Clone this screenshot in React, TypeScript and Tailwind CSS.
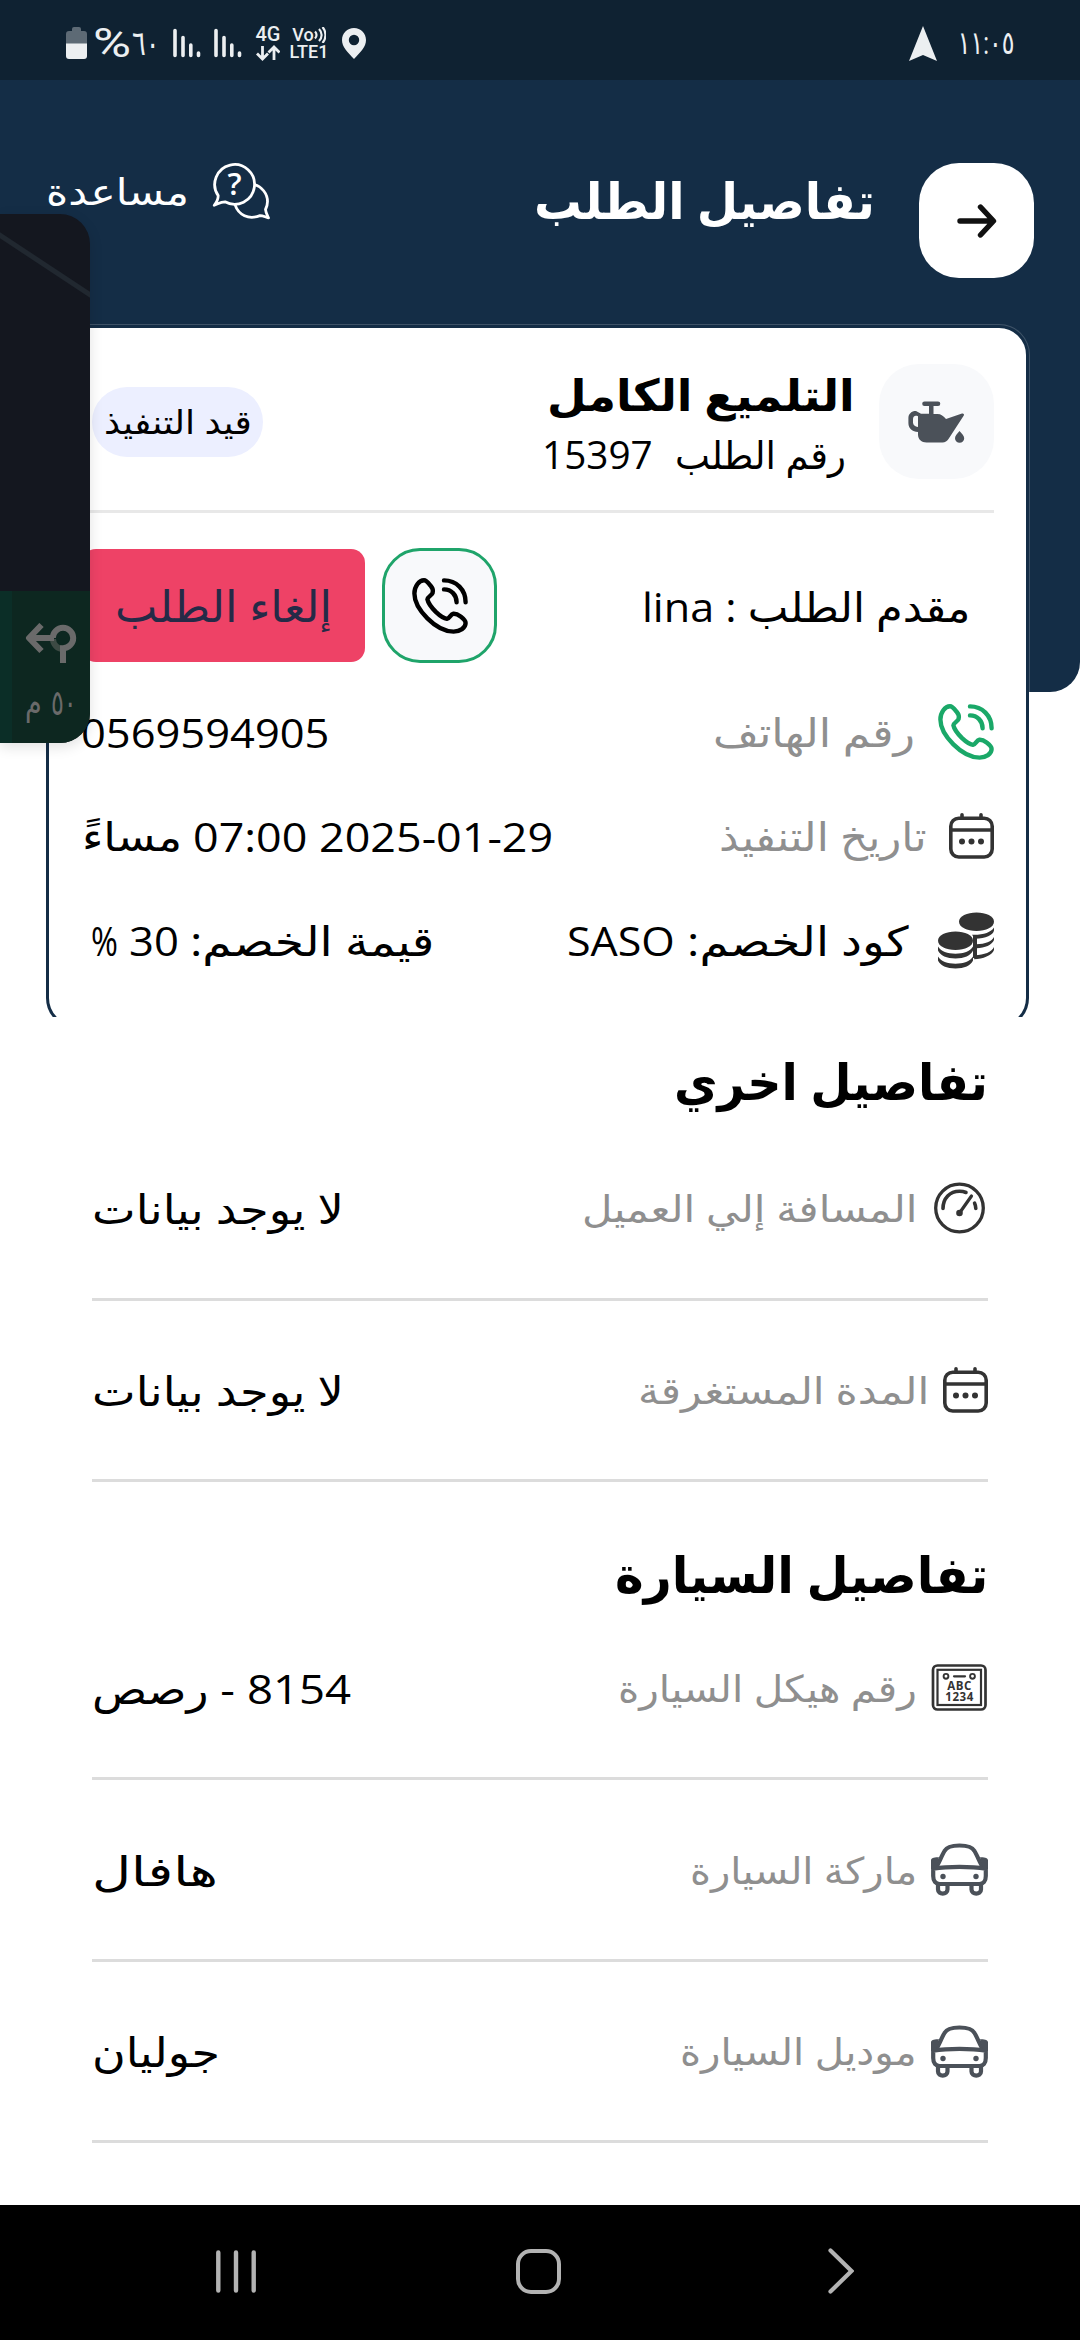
import { useLayoutEffect, useRef, useState, type ReactNode } from 'react'

// Stretches or squeezes a single line so that it fills the width given by its classes
function FitText({ className, children }: { className: string; children: ReactNode }) {
  const box = useRef<HTMLSpanElement>(null)
  const line = useRef<HTMLSpanElement>(null)
  const [scale, setScale] = useState(1)

  useLayoutEffect(() => {
    if (!box.current || !line.current) return
    setScale(box.current.offsetWidth / line.current.offsetWidth)
  }, [children])

  return (
    <span ref={box} className={`flex shrink-0 justify-start ${className}`}>
      <span
        ref={line}
        className="block shrink-0 whitespace-pre origin-right"
        style={{ transform: `scaleX(${scale})` }}
      >
        {children}
      </span>
    </span>
  )
}

function PhoneIcon({ className }: { className: string }) {
  return (
    <svg viewBox="0 0 56 56" className={className} fill="none" stroke="currentColor" strokeWidth="4.4" strokeLinecap="round" strokeLinejoin="round">
      <path d="M2.4 15.5C2.4 8.5 7 2.3 12 2.3c2.6 0 4.4 2.6 6.6 5.4 2.2 2.7 3 4.6 2 7.4-.9 2.4-5 3.6-5.2 6.2.6 3 4.4 8.6 8.4 12.6 4 3.8 8.6 6.6 11.2 7 2.6-.4 3.6-4.8 6.4-5.2 2.6-.2 4.6.8 7.2 2.8 2.8 2.2 5 3.8 5 6.5 0 5-5.6 8.6-12 8.600C24 53.600 2.400 31 2.400 15.500z" />
      <path d="M32 2.400c12.400 0 21.600 9.200 21.600 21.800" />
      <path d="M32 11.400c7.400 0 12.600 5.600 12.600 12.800" />
    </svg>
  )
}

function HelpIcon() {
  return (
    <svg viewBox="0 0 56 56" className="size-14 overflow-visible" fill="none" stroke="currentColor" strokeWidth="2.8" strokeLinejoin="round">
      <path d="M5.2 32.600A19.900 19.900 0 1 1 12 38.800C8 38.800 5 40.800 1.200 42.300c2.600-3 4-6 4-9.700z" />
      <path d="M41.500 21.500c7 2 13 9 13 17 0 3-.8 5.600-2 8 .2 3 1.600 5.500 3 8.300-3-.6-5.500-2.300-8.500-2.200-11.500 4.500-21.500-.6-25-11" />
      <text x="21.5" y="32" textAnchor="middle" fontSize="31" fontFamily="Open Sans" fontWeight="600" fill="currentColor" stroke="none">?</text>
    </svg>
  )
}

function OilCanIcon() {
  return (
    <svg viewBox="0 0 57 42" className="w-[57px] h-[42px]" fill="#4b5159">
      <path d="M16.500.500h13.500a2.200 2.200 0 0 1 0 4.600h-4.500V13h4c3.500 0 6 2 8.500 5l16-5.400c1.500-.4 2.500.8 1.800 2L40.500 38c-1.600 2.300-3.200 3.400-6 3.400H18.500c-5 0-8.500-3.200-8.500-8V31C4.500 30.500.400 27.500.400 22v-5C.400 12.500 4 9.800 8 10l5 2.800h8V5.100h-4.500a2.200 2.200 0 0 1 0-4.600zM10 15.200c-3-1.200-5 0-5 3v3.300c0 2.500 2 4.200 5 4.500z" />
      <path d="M51.500 30c2.500 3 4.700 4.800 4.700 7.200a4.600 4.600 0 0 1-9.200 0c0-2.400 2.200-4.200 4.500-7.200z" />
    </svg>
  )
}

function CalendarIcon() {
  return (
    <svg viewBox="0 0 45 46" className="w-[45px] h-[46px] shrink-0" fill="none" stroke="#333" strokeWidth="3.6">
      <rect x="1.8" y="5.2" width="41.4" height="38.8" rx="8" />
      <path d="M2 17h41" />
      <path d="M13 5V1.800M32 5V1.800" strokeLinecap="round" />
      <g fill="#333" stroke="none">
        <circle cx="13" cy="28.5" r="3" />
        <circle cx="22.5" cy="28.5" r="3" />
        <circle cx="32" cy="28.5" r="3" />
      </g>
    </svg>
  )
}

function CoinsIcon() {
  return (
    <svg viewBox="0 0 56 57" className="w-14 h-[57px] shrink-0" fill="#333">
      <ellipse cx="38.5" cy="9.7" rx="17.5" ry="9.3" />
      <path d="M56 15.500v3c-1 4.500-8 8-19 8.300l-3-4c11 .4 19-2.300 22-7.300z" />
      <path d="M56 25v3c-2 5-9 8-17.500 8.300v-4C47 32 54 29.500 56 25zM56 35v3c-2 5.500-11 9-20 9.300l1-4C46 43 54 40 56 35z" />
      <path d="M35 24h4v22h-4z" />
      <ellipse cx="17.5" cy="28.7" rx="17.5" ry="9.3" />
      <path d="M0 34.500c3 5 9.500 7.200 17.500 7.200S32 39.500 35 34.500v4c-2 5-9 8-17.500 8S2 43.500 0 38.500zM0 44.500c3 5 9.500 7.200 17.500 7.200S32 49.500 35 44.500v4c-2 5-9 8-17.500 8S2 53.500 0 48.500z" />
    </svg>
  )
}

function GaugeIcon() {
  return (
    <svg viewBox="0 0 57 52" className="w-[57px] h-[52px] shrink-0" fill="none" stroke="#333" strokeLinecap="round">
      <circle cx="28.5" cy="26" r="23.8" strokeWidth="3.3" />
      <path d="M12 26.500C12 16 19 9.200 28.500 9.200c2.500 0 4.500.4 6.500 1.300M43.600 21.200c.8 1.700 1.200 3.300 1.200 5.200" strokeWidth="3.6" />
      <path d="M28.500 31l12-17" strokeWidth="3.2" />
      <circle cx="28.5" cy="31" r="3.300" fill="#333" stroke="none" />
    </svg>
  )
}

function PlateIcon() {
  return (
    <svg viewBox="0 0 57 47" className="w-[57px] h-[47px] shrink-0" fill="none" stroke="#333">
      <rect x="2" y="1.5" width="52.5" height="44" rx="4.5" strokeWidth="2.7" />
      <rect x="6.5" y="5.8" width="43.5" height="35.2" strokeWidth="2.2" />
      <circle cx="15" cy="12.3" r="2.4" strokeWidth="1.9" />
      <circle cx="41.5" cy="12.3" r="2.4" strokeWidth="1.9" />
      <path d="M23 12.300h11" strokeWidth="2.2" strokeLinecap="round" />
      <g fill="#333" stroke="none" fontFamily="Open Sans" fontWeight="700" textAnchor="middle">
        <text x="28.3" y="25.5" fontSize="11.5" textLength="24" direction="ltr">ABC</text>
        <text x="28.3" y="37" fontSize="11.5" textLength="28" direction="ltr">1234</text>
      </g>
    </svg>
  )
}

function CarIcon() {
  return (
    <svg viewBox="0 0 57 53" className="w-[57px] h-[53px] shrink-0" fill="none" stroke="#4b5159" strokeWidth="4.2" strokeLinejoin="round">
      <path d="M4.500 25.500C8 20 10.500 13 13.500 8 15.500 4 20 2.500 28.500 2.500s13 1.500 15 5.500c3 5 5.500 12 9 17.500" />
      <path d="M2.200 25.800C17 23.200 40 23.200 54.800 25.800V33c0 5-2.500 8-6.500 8H8.700c-4 0-6.500-3-6.500-8z" />
      <path d="M7 41v5.500c0 5.500 9.500 5.500 9.500 0V41M40.500 41v5.500c0 5.500 9.500 5.500 9.500 0V41" />
      <path d="M0 17.500c0-2.500 3-3.500 8-3.300L4.500 26H0zM57 17.500c0-2.500-3-3.500-8-3.300L52.500 26H57z" fill="#4b5159" stroke="none" />
      <circle cx="12" cy="33.500" r="2.700" fill="#4b5159" stroke="none" />
      <circle cx="45" cy="33.500" r="2.700" fill="#4b5159" stroke="none" />
    </svg>
  )
}

function SignalBars() {
  return (
    <svg viewBox="0 0 28 30" className="w-7 h-[30px]" stroke="#eceff1" strokeWidth="3.6" strokeLinecap="round">
      <path d="M2 2.500v25M10 9.500v18M17.800 17v10.500M25.500 25v2.500" />
    </svg>
  )
}

function StatusBar() {
  return (
    <div dir="ltr" className="h-20 shrink-0 bg-[#0f2232] text-[#eceff1] flex items-center justify-between px-[66px] pb-[20px] pt-[26px] font-['Roboto','DejaVu_Sans',sans-serif]">
      <div className="flex items-center h-[34px]">
        <svg viewBox="0 0 21 32" className="w-[21px] h-8">
          <path d="M6 4V2a2 2 0 0 1 2-2h5a2 2 0 0 1 2 2v2h3a3 3 0 0 1 3 3v10H0V7a3 3 0 0 1 3-3z" fill="#5d6a75" />
          <path d="M0 16.500h21V29a3 3 0 0 1-3 3H3a3 3 0 0 1-3-3z" fill="#eceff1" />
        </svg>
        <FitText className="w-[38px] ml-[6px] text-[41px] leading-[36px] flex-row-reverse">%</FitText>
        <FitText className="w-[28px] ml-[1px] text-[34px] leading-[34px] flex-row-reverse">٦٠</FitText>
        <div className="flex gap-[13px] ml-[13px]">
          <SignalBars />
          <SignalBars />
        </div>
        <div className="ml-[13px] flex flex-col items-center w-[26px]">
          <span className="text-[20px] leading-[17px] font-medium">4G</span>
          <svg viewBox="0 0 24 16" className="w-6 h-4 mt-[2px]" fill="none" stroke="#eceff1" strokeWidth="2.8">
            <path d="M6.500 1v12.500M1 8.500l5.500 5.500L12 8.500M18 15V2.500M12.500 7.500L18 2l5.500 5.500" />
          </svg>
        </div>
        <div className="ml-[9px] flex flex-col items-center w-[38px] font-medium">
          <div className="flex items-center">
            <span className="text-[18px] leading-[17px]">Vo</span>
            <svg viewBox="0 0 12 16" className="w-3 h-4" fill="none" stroke="#eceff1" strokeWidth="2.2">
              <path d="M1 4.500c2 2 2 5 0 7M5 2c3.500 3.500 3.500 8.500 0 12M8.500 0c4 4.500 4 11.500 0 16" />
            </svg>
          </div>
          <span className="text-[18px] leading-[17px]">LTE1</span>
        </div>
        <svg viewBox="0 0 24 31" className="w-6 h-[31px] ml-[14px]">
          <path d="M12 0c6.800 0 12 5.300 12 12 0 7-5.500 12-12 19C5.500 24 0 19 0 12 0 5.300 5.200 0 12 0zm0 6.800a5.200 5.200 0 1 0 0 10.400 5.200 5.200 0 0 0 0-10.400z" fill="#eceff1" fillRule="evenodd" />
        </svg>
      </div>
      <div className="flex items-center">
        <svg viewBox="0 0 28 35" className="w-7 h-[35px]">
          <path d="M14 0l14 35-14-6-14 6z" fill="#eceff1" />
        </svg>
        <FitText className="w-[57px] ml-[20px] text-[32px] leading-[34px] flex-row-reverse">١١:٠٥</FitText>
      </div>
    </div>
  )
}

function Header() {
  return (
    <header className="h-[612px] shrink-0 bg-[#142d46] rounded-b-[30px] px-[46px] pt-[83px] flex items-start text-white">
      <button className="size-[115px] rounded-[40px] bg-white flex items-center justify-center">
        <svg viewBox="0 0 40 34" className="w-10 h-[34px]" fill="none" stroke="#111" strokeWidth="5.4" strokeLinecap="round" strokeLinejoin="round">
          <path d="M3 17h33M23.500 3L36.500 17 23.500 31" />
        </svg>
      </button>
      <h1 className="mr-[44px]">
        <FitText className="w-[341px] text-[50px] leading-[74px] font-bold">تفاصيل الطلب</FitText>
      </h1>
      <div className="mr-auto flex items-center gap-[24px]">
        <HelpIcon />
        <FitText className="w-[143px] text-[37px] leading-[56px]">مساعدة</FitText>
      </div>
    </header>
  )
}

function OrderCard() {
  return (
    <section className="relative -mt-[367px] h-[692px] shrink-0 mr-[51px] ml-[46px]">
      <div className="h-full [clip-path:inset(-2px_-2px_0_-2px)]">
        <div className="h-[703px] bg-white border-[3px] border-[#142d46] rounded-[30px] shadow-[0_0_0_1px_rgba(255,255,255,0.18)] pr-8 pl-[33px] pt-9">
          <div className="h-[115px] flex items-start">
            <div className="size-[115px] rounded-[40px] bg-[#f8f9fb] flex items-center justify-center">
              <OilCanIcon />
            </div>
            <div className="mr-[24px]">
              <FitText className="w-[308px] text-[44px] leading-[60px] font-bold">التلميع الكامل</FitText>
              <div className="flex gap-[22px] mr-[9px]">
                <FitText className="w-[171px] text-[38px] leading-[60px]">رقم الطلب</FitText>
                <FitText className="w-[111px] text-[38px] leading-[60px]">15397</FitText>
              </div>
            </div>
            <div className="self-center mr-auto ml-[10px] w-[171px] h-[70px] rounded-full bg-[#ecefff] flex items-center justify-center">
              <FitText className="w-[148px] text-[33px] leading-[70px]">قيد التنفيذ</FitText>
            </div>
          </div>

          <div className="h-[3px] mt-[31px] bg-[#e8e8e8]" />

          <div className="h-[115px] mt-[35px] flex items-center">
            <FitText className="mr-[24px] w-[328px] text-[41px] leading-[60px]">مقدم الطلب : lina</FitText>
            <button className="mr-auto size-[115px] rounded-[38px] border-[3px] border-[#1fa46a] bg-[#f8f9fb] flex items-center justify-center">
              <PhoneIcon className="size-14 text-black" />
            </button>
            <button className="mr-[17px] w-[283px] h-[113px] rounded-[14px] bg-[#ee4266] text-[#252a47] flex items-center pr-[33px]">
              <FitText className="w-[217px] text-[43px] leading-[60px]">إلغاء الطلب</FitText>
            </button>
          </div>

          <div className="h-[105px] mt-[16px] flex items-center">
            <PhoneIcon className="size-14 text-[#1aa868] shrink-0" />
            <FitText className="mr-[23px] w-[202px] text-[40px] leading-[60px] text-[#8f8f8f]">رقم الهاتف</FitText>
            <FitText className="mr-auto -ml-px w-[248px] text-[41px] leading-[60px]">0569594905</FitText>
          </div>
          <div className="h-[104px] flex items-center">
            <CalendarIcon />
            <FitText className="mr-[22px] w-[208px] text-[40px] leading-[60px] text-[#8f8f8f]">تاريخ التنفيذ</FitText>
            <div className="mr-auto flex gap-[11px]">
              <FitText className="w-[360px] text-[41px] leading-[60px]"><bdi dir="ltr">07:00 2025-01-29</bdi></FitText>
              <FitText className="w-[100px] text-[40px] leading-[60px]">مساءً</FitText>
            </div>
          </div>
          <div className="h-[104px] flex items-center">
            <CoinsIcon />
            <div className="mr-[29px] flex gap-[12px]">
              <FitText className="w-[222px] text-[41px] leading-[60px]">كود الخصم:</FitText>
              <FitText className="w-[108px] text-[41px] leading-[60px]">SASO</FitText>
            </div>
            <div className="mr-auto ml-[9px] flex gap-[11px]">
              <FitText className="w-[244px] text-[41px] leading-[60px]">قيمة الخصم:</FitText>
              <FitText className="w-[50px] text-[41px] leading-[60px]">30</FitText>
              <FitText className="w-[27px] text-[41px] leading-[60px]">%</FitText>
            </div>
          </div>
        </div>
      </div>
    </section>
  )
}

type RowProps = {
  icon: ReactNode
  label: string
  labelClass: string
  value: string
  valueClass: string
  className: string
}

function DetailRow({ icon, label, labelClass, value, valueClass, className }: RowProps) {
  return (
    <div className={`flex items-center border-b-[3px] border-[#dcdcdc] ${className}`}>
      {icon}
      <FitText className={`mr-[14px] text-[37px] leading-[60px] text-[#8f8f8f] ${labelClass}`}>{label}</FitText>
      <FitText className={`mr-auto text-[41px] leading-[60px] ${valueClass}`}>{value}</FitText>
    </div>
  )
}

function NavBar() {
  return (
    <nav dir="ltr" className="mt-auto h-[135px] shrink-0 bg-black flex items-center justify-between pl-[216px] pr-[226px] pb-[3px]">
      <svg viewBox="0 0 40 43" className="w-10 h-[43px]" stroke="#b3b3b3" strokeWidth="4.4" strokeLinecap="round">
        <path d="M2.300 2.500v38M20 2.500v38M37.700 2.500v38" />
      </svg>
      <div className="size-[45px] rounded-[15px] border-4 border-[#b3b3b3] mr-[8px]" />
      <svg viewBox="0 0 26 46" className="w-[26px] h-[46px]" fill="none" stroke="#b3b3b3" strokeWidth="4.2" strokeLinecap="round">
        <path d="M2.500 2.500L23.500 23 2.500 43.500" />
      </svg>
    </nav>
  )
}

// Navigation app minimised to the screen edge
function FloatingMap() {
  return (
    <div dir="ltr" className="absolute left-0 top-[214px] w-[90px] h-[529px] rounded-r-[30px] overflow-hidden bg-[#14171f] flex flex-col shadow-[0_4px_14px_rgba(0,0,0,0.12)]">
      <svg viewBox="0 0 90 377" className="w-[90px] h-[377px]">
        <path d="M-5 18L95 84" stroke="#212830" strokeWidth="5" />
      </svg>
      <div className="flex-1 bg-[#0d2720] border-l-[12px] border-[#0b2e27] text-[#6a6a6a] flex flex-col items-center pt-[32px]">
        <svg viewBox="0 0 52 40" className="w-[52px] h-10" fill="none" stroke="currentColor" strokeWidth="6">
          <path d="M28 16a10.200 10.200 0 0 0 10 10" stroke="#3d4a44" />
          <path d="M38 40V25.200a10.200 10.200 0 1 0-10.200-10.200" />
          <path d="M29 15H5M16.500 2L4 15l12.500 13" strokeLinejoin="round" />
        </svg>
        <div dir="rtl" className="flex justify-center gap-[9px] mt-[17px]">
          <FitText className="w-[26px] text-[35px] leading-[44px]">٥٠</FitText>
          <FitText className="w-[17px] text-[35px] leading-[44px]">م</FitText>
        </div>
      </div>
    </div>
  )
}

export default function App() {
  return (
    <div dir="rtl" className="relative w-[1080px] h-[2340px] overflow-hidden bg-white text-black flex flex-col font-['Open_Sans','DejaVu_Sans',sans-serif]">
      <StatusBar />
      <Header />
      <OrderCard />

      <main className="px-[92px] shrink-0">
        <h2 className="mt-[28px]">
          <FitText className="w-[314px] text-[50px] leading-[72px] font-bold">تفاصيل اخري</FitText>
        </h2>
        <DetailRow icon={<GaugeIcon />} label="المسافة إلي العميل" labelClass="w-[335px]" value="لا يوجد بيانات" valueClass="w-[252px]" className="h-[184px]" />
        <DetailRow icon={<CalendarIcon />} label="المدة المستغرقة" labelClass="w-[291px]" value="لا يوجد بيانات" valueClass="w-[252px]" className="h-[181px]" />

        <h2 className="mt-[56px]">
          <FitText className="w-[373px] text-[50px] leading-[72px] font-bold">تفاصيل السيارة</FitText>
        </h2>
        <DetailRow icon={<PlateIcon />} label="رقم هيكل السيارة" labelClass="w-[299px]" value="8154 - رصص" valueClass="w-[259px]" className="h-[170px] pb-3" />
        <DetailRow icon={<CarIcon />} label="ماركة السيارة" labelClass="w-[227px]" value="هافال" valueClass="w-[126px]" className="h-[182px]" />
        <DetailRow icon={<CarIcon />} label="موديل السيارة" labelClass="w-[237px]" value="جوليان" valueClass="w-[128px]" className="h-[181px]" />
      </main>

      <NavBar />
      <FloatingMap />
    </div>
  )
}
